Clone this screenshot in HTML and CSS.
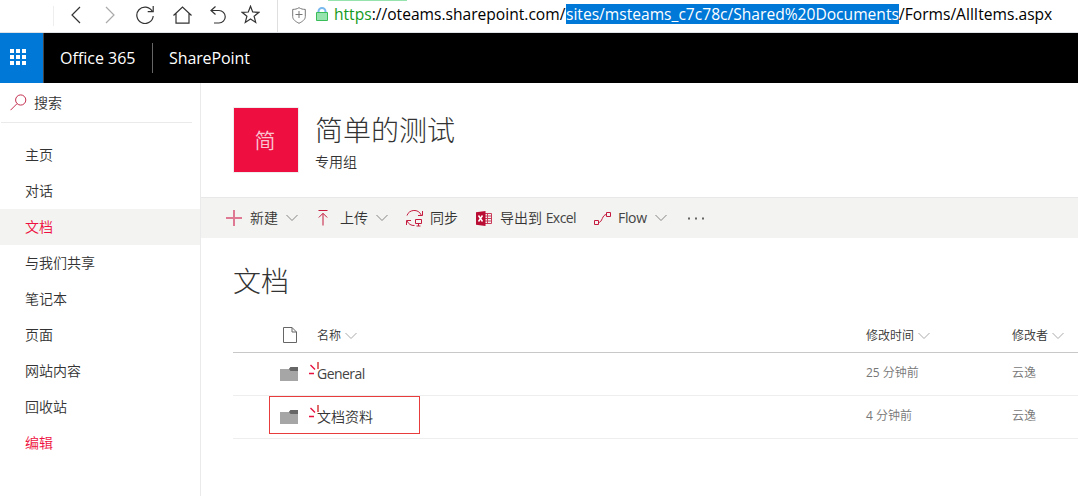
FILE: index.html
```html
<!DOCTYPE html>
<html lang="zh-CN">
<head>
<meta charset="utf-8">
<title>简单的测试 - 文档</title>
<link rel="stylesheet" href="styles.css">
</head>
<body>
<svg class="defs" width="0" height="0">
  <symbol id="chev" viewBox="0 0 12 8"><path d="M.5 1 6 6.500 11.500 1" fill="none" stroke="currentColor"/></symbol>
  <symbol id="folder" viewBox="0 0 18 14"><path d="M0 2h9l1.500-2H18v14H0z" fill="#a6a6a6"/><path d="M9 2l1.500-2H18v4h-7.500z" fill="#666"/></symbol>
  <symbol id="new" viewBox="0 0 12 14"><path d="M1.500 3 6 7.500M0 11.500h5" fill="none" stroke="#e8113f" stroke-width="1.400"/><path d="M9 0v7" stroke="#df6b6b" stroke-width="2"/></symbol>
</svg>
<div class="browser">
  <div class="tools">
    <i class="tick"></i>
    <svg class="back" width="10" height="18" viewBox="0 0 10 18"><path d="M9 1 1 9l8 8"/></svg>
    <svg class="fwd" width="10" height="18" viewBox="0 0 10 18"><path d="m1 1 8 8-8 8"/></svg>
    <svg class="reload" width="19" height="18" viewBox="0 0 19 18"><path d="M16.200 5.300A8.200 8.200 0 1 0 17.200 10M17.200 0v5.700h-5.500"/></svg>
    <svg class="home" width="19" height="18" viewBox="0 0 19 18"><path d="M.5 9.500 9.500 1l9 8.500M3 7.500v9.700h13V7.500"/></svg>
    <svg class="undo" width="16" height="18" viewBox="0 0 16 18"><path d="M5.500.5 1 4.500l4.500 4M1 4.500h8a6.100 6.100 0 0 1 0 12.500H4"/></svg>
    <svg class="star" width="19" height="19" viewBox="0 0 19 19"><path d="m9.500 1.200 2.200 5.800 6.200.3-4.800 3.900 1.600 6.200-5.200-3.400-5.200 3.400 1.600-6.200L1.100 7.300l6.200-.3z"/></svg>
  </div>
  <div class="address">
    <i class="progress"></i>
    <svg class="shield" width="14" height="17" viewBox="0 0 14 17"><path d="M7 .7c2 1.300 4 1.700 6.300 1.700v7.100c0 3.300-3 5-6.300 6.800-3.300-1.800-6.300-3.500-6.300-6.800V2.400C3 2.400 5 2 7 .7zM3.500 7.500h7M7 4v7"/></svg>
    <svg class="lock" width="12" height="14" viewBox="0 0 12 14"><path d="M2.500 6V4.500a3.500 3.500 0 0 1 7 0V6" fill="none" stroke="#79b9ee" stroke-width="2"/><path d="M.5 5.500h11v8H.5z" fill="#97e3ad" stroke="#38bd58"/></svg>
    <div class="url"><span class="origin"><b>https</b>://oteams.sharepoint.com/</span><span class="sel">sites/msteams_c7c78c/Shared%20Documents</span><span class="tail">/Forms/AllItems.aspx</span></div>
  </div>
</div>
<header class="suite">
  <div class="waffle"><svg width="16" height="16" viewBox="0 0 16 16"><path fill="#fff" d="M0 0h4v4H0zM6 0h4v4H6zM12 0h4v4h-4zM0 6h4v4H0zM6 6h4v4H6zM12 6h4v4h-4zM0 12h4v4H0zM6 12h4v4H6zM12 12h4v4h-4z"/></svg></div>
  <span class="brand">Office 365</span>
  <span class="app">SharePoint</span>
</header>
<div class="page">
  <nav class="side">
    <div class="search"><svg width="17" height="17" viewBox="0 0 17 17"><circle cx="10.700" cy="6" r="5.100"/><path d="M7 9.700.5 16.200"/></svg><span>搜索</span></div>
    <ul>
      <li>主页</li><li>对话</li><li class="on">文档</li><li>与我们共享</li><li>笔记本</li><li>页面</li><li>网站内容</li><li>回收站</li><li class="edit">编辑</li>
    </ul>
  </nav>
  <main>
    <div class="site">
      <div class="logo">简</div>
      <div><h1>简单的测试</h1><p>专用组</p></div>
    </div>
    <div class="commands">
      <div class="cmd c-new"><svg width="16" height="16" viewBox="0 0 16 16"><path d="M0 8h16M8 0v16" stroke="#df7892" stroke-width="2"/></svg><span>新建</span><svg class="chev"><use href="#chev"/></svg></div>
      <div class="cmd c-up"><svg width="10" height="16" viewBox="0 0 10 16"><path class="line" d="M.5.5h9M5 15.500v-12M.8 7.500 5 3.300l4.200 4.200"/></svg><span>上传</span><svg class="chev"><use href="#chev"/></svg></div>
      <div class="cmd c-sync"><svg width="17" height="17" viewBox="0 0 17 17"><path class="line" d="M1 5.500C3-.8 12.500-1.500 15.200 5M16.500 1v4.500H12M.5 15v-4.500H5M1 11c1.500 3 4 4.700 7.500 4.500M9.500 9.500h6v4h-6zM12.500 13.500v2.500M10.500 16h4"/></svg><span>同步</span></div>
      <div class="cmd c-excel"><svg width="16" height="15" viewBox="0 0 16 15"><path d="M8 2.500h7.500v10H8M8 5h7M8 7.500h7M8 10h7M11.500 2.500v10" fill="none" stroke="#c93b58"/><path d="M0 1.300 9.500 0v15L0 13.700z" fill="#ba0d33"/><path d="m2.500 4.500 4 6m0-6-4 6" stroke="#fff" stroke-width="1.500"/></svg><span>导出到 <em>Excel</em></span></div>
      <div class="cmd c-flow"><svg width="17" height="13" viewBox="0 0 17 13"><path class="line" d="M.5 8.500h4v4h-4zM12.500.5h4v4h-4zM4.500 10.500c4 0 3.500-8 8-8"/></svg><span><em>Flow</em></span><svg class="chev"><use href="#chev"/></svg></div>
      <svg class="more" width="17" height="3" viewBox="0 0 17 3"><path fill="#666" d="M0 .5h2v2H0zM7 .5h2v2H7zM14 .5h2v2h-2z"/></svg>
    </div>
    <section class="library">
      <h2>文档</h2>
      <div class="row head">
        <span class="type"><svg width="14" height="16" viewBox="0 0 14 16"><path d="M.5.5H9L13.500 5v10.500H.5zM9 .5V5h4.500" fill="none" stroke="#666"/></svg></span>
        <span>名称<svg class="chev"><use href="#chev"/></svg></span>
        <span>修改时间<svg class="chev"><use href="#chev"/></svg></span>
        <span>修改者<svg class="chev"><use href="#chev"/></svg></span>
      </div>
      <div class="row">
        <span class="type"><svg width="18" height="14"><use href="#folder"/></svg></span>
        <span class="name"><svg class="fresh" width="12" height="14"><use href="#new"/></svg><em>General</em></span>
        <span class="meta">25 分钟前</span><span class="meta">云逸</span>
      </div>
      <div class="row marked">
        <span class="type"><svg width="18" height="14"><use href="#folder"/></svg></span>
        <span class="name"><svg class="fresh" width="12" height="14"><use href="#new"/></svg>文档资料</span>
        <span class="meta">4 分钟前</span><span class="meta">云逸</span>
      </div>
    </section>
  </main>
</div>
</body>
</html>
```
FILE: styles.css
```css
*, *::after { box-sizing: border-box; }
body { margin: 0; height: 496px; overflow: hidden; background: #fff; color: #333; font: 350 14px/20px "Open Sans", "Noto Sans CJK SC DemiLight", "Noto Sans CJK SC", sans-serif; }
.defs { position: absolute; }
svg { display: block; flex: none; }
em, b, i { font-style: normal; font-weight: 400; }
em { color: #444; letter-spacing: -.55px; }
ul, h1, h2, p { margin: 0; padding: 0; list-style: none; }

.browser { display: flex; height: 33px; border-bottom: 1px solid #dfe2e6; }
.tools { display: flex; align-items: flex-start; width: 278px; padding: 6px 0 0 53px; border-right: 1px solid #dfdfdf; }
.tools svg { fill: none; stroke: #333; stroke-width: 1.2; }
.tick { width: 1px; height: 20px; background: #eee; }
.back { margin-left: 17px; }
.tools .fwd { margin-left: 24px; stroke: #aaa; }
.reload { margin-left: 21px; }
.home { margin-left: 18px; }
.undo { margin-left: 18px; }
.star { margin: -1px 0 0 15px; }
.address { position: relative; display: flex; flex: 1; align-items: flex-start; padding-left: 14px; }
.progress { position: absolute; left: 50px; top: 0; width: 79px; height: 1px; background: #97e3ad; }
.shield { margin-top: 7px; fill: none; stroke: #777; }
.lock { margin: 7px 0 0 10px; }
.url { display: flex; margin: 4px 0 0 6px; color: #000; font-size: 15.6px; font-weight: 400; line-height: 20px; white-space: nowrap; }
.url b { color: #159a20; }
.origin { width: 232px; }
.sel { width: 333px; color: #fff; background: #0078d7; }
.tail { width: 154px; }

.suite { display: flex; align-items: center; height: 50px; background: #000; color: #fff; font-size: 16px; font-weight: 400; }
.waffle { display: flex; width: 44px; height: 50px; padding: 16px 0 0 10px; background: #0078d7; border-right: 1px solid #444; }
.brand { width: 93px; height: 30px; margin-left: 16px; border-right: 1px solid #666; line-height: 30px; white-space: nowrap; }
.app { margin-left: 16px; letter-spacing: -.1px; white-space: nowrap; }

.page { display: flex; height: 413px; }
.side { width: 201px; border-right: 1px solid #eaeaea; }
.search { display: flex; align-items: center; width: 191px; height: 40px; margin-left: 1px; padding-left: 9px; gap: 7px; border-bottom: 1px solid #eaeaea; }
.search span { padding-top: 1px; }
.search svg { fill: none; stroke: #c52f50; }
.side ul { padding-top: 14px; }
.side li { height: 36px; padding-left: 25px; line-height: 36px; }
.side .on { background: #f3f3f1; color: #ee0f40; }
.side .edit { color: #ee0f40; }

main { flex: 1; min-width: 0; }
.site { display: flex; height: 114px; padding: 24px 0 0 32px; }
.logo { width: 66px; height: 66px; padding: 1px 2px 0 0; border: 1px solid #eee; background: #ee0f40; background-clip: padding-box; color: #fac3cf; font-size: 21px; line-height: 62px; text-align: center; }
h1, h2 { font-weight: 300; font-size: 28px; font-family: "Noto Sans CJK SC Light", "Noto Sans CJK SC", sans-serif; }
h1 { margin: 3px 0 0 16px; line-height: 38px; }
.site p { margin: 4px 0 0 16px; }
.commands { display: flex; align-items: center; height: 41px; padding-left: 25px; background: #f3f3f1; border-top: 1px solid #e8e8e8; }
.cmd { display: flex; align-items: center; white-space: nowrap; }
.line { fill: none; stroke: #c51b3e; }
.chev { width: 12px; height: 8px; color: #858585; }
.cmd .chev { margin-left: 8px; }
.c-new { width: 92px; }
.c-new span { margin-left: 8px; }
.c-up { width: 88px; }
.c-up span { margin-left: 12px; }
.c-sync { width: 70px; }
.c-sync span { margin-left: 7px; }
.c-excel { width: 118px; }
.c-excel span { margin-left: 8px; }
.c-flow { width: 94px; }
.c-flow span { margin-left: 7px; }
.c-flow em { letter-spacing: -.35px; }

.library { padding-left: 32px; }
h2 { height: 80px; padding-top: 22px; line-height: 40px; }
.row { position: relative; display: grid; grid-template-columns: 84px 549px 146px 1fr; align-items: center; height: 43px; border-bottom: 1px solid #eee; }
.row > span { display: flex; align-items: center; white-space: nowrap; }
.row .type { padding-left: 47px; }
.head { height: 35px; padding-top: 1px; border-color: #c8c8c8; font-size: 12px; font-weight: 400; }
.head .type { padding: 0 0 1px 50px; }
.head .chev { margin-left: 4px; color: #aaa; }
.row .name { position: relative; }
.fresh { position: absolute; left: -8px; top: -2px; }
.meta { padding-bottom: 2px; color: #777; font-size: 12px; font-weight: 400; }
.marked::after { content: ""; position: absolute; left: 36px; top: 0; width: 151px; height: 38px; border: 1px solid #e83b3b; }
```
